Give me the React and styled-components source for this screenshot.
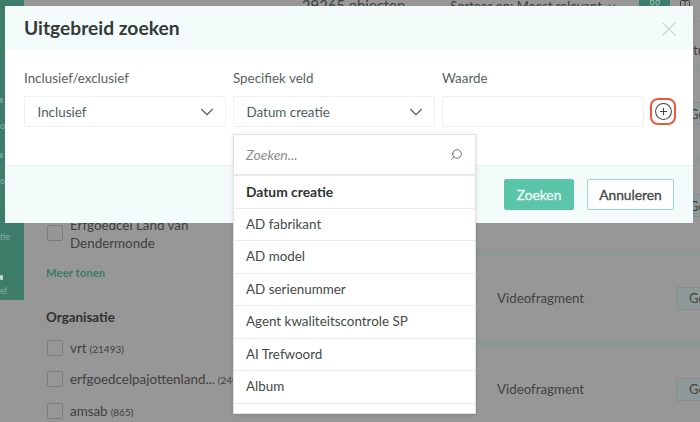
import React from 'react';
import styled, { createGlobalStyle } from 'styled-components';
import { ChevronDown, Search, CirclePlus, X, LayoutGrid, Columns2 } from 'lucide-react';

const GlobalStyle = createGlobalStyle`
  html, body {
    margin: 0;
    padding: 0;
    background: #979797;
  }
  * {
    box-sizing: border-box;
  }
`;

const Page = styled.div`
  position: relative;
  display: flex;
  align-items: flex-start;
  width: 700px;
  height: 422px;
  overflow: hidden;
  background: #979797;
  font-family: Lato, "Open Sans", sans-serif;
  color: #3d4241;
`;

const Sidebar = styled.div`
  flex: 0 0 24px;
  height: 300px;
  overflow: hidden;
  display: flex;
  flex-direction: column;
  align-items: flex-start;
  background: #3d7d69;
  color: #86b0a2;
  font-size: 9px;
  line-height: 10px;
`;

const SideLabel = styled.span`
  margin-top: ${(p) => p.$top}px;
`;

const SideMark = styled.span`
  width: 3px;
  height: 5px;
  margin-top: ${(p) => p.$top}px;
  border-radius: 1px;
  background: ${(p) => (p.$faint ? '#6d9f8e' : '#c4d8d0')};
`;

const Filters = styled.div`
  flex: 0 0 260px;
  padding-left: 23px;
  height: 422px;
`;

const FilterRow = styled.div`
  display: flex;
  align-items: ${(p) => (p.$wrap ? 'flex-start' : 'center')};
  gap: 7px;
  height: ${(p) => (p.$wrap ? '36px' : '16px')};
  margin-top: ${(p) => p.$top}px;
  font-size: 13.4px;
  line-height: 18px;
  color: #404040;
`;

const Checkbox = styled.span`
  flex: 0 0 16px;
  height: 16px;
  border: 1px solid #7d7d7d;
  border-radius: 2px;
  margin-top: ${(p) => (p.$wrap ? '9px' : '0')};
`;

const Count = styled.span`
  font-size: 10px;
  margin-left: 3px;
`;

const MoreLink = styled.div`
  margin: 13px 0 0 -1px;
  font-size: 11.4px;
  line-height: 16px;
  font-weight: 700;
  color: #3d7d69;
`;

const FilterTitle = styled.div`
  margin: 27px 0 0 -1px;
  font-size: 13.4px;
  line-height: 18px;
  font-weight: 700;
  color: #2f3332;
`;

const Results = styled.div`
  flex: 1;
  min-width: 0;
`;

const TopBar = styled.div`
  display: flex;
  align-items: flex-start;
  height: 22px;
  padding-left: 18px;
  border-bottom: 1px solid #85958f;
  font-size: 14.8px;
  line-height: 11px;
  white-space: nowrap;
`;

const SortBox = styled.div`
  display: flex;
  align-items: center;
  gap: 4px;
  margin-left: 45px;
  width: 193px;
  font-size: 13px;
`;

const ViewToggle = styled.div`
  display: flex;
  align-items: center;
  justify-content: center;
  width: ${(p) => (p.$active ? '32px' : '20px')};
  height: 10px;
  margin-right: 5px;
  background: ${(p) => (p.$active ? '#3d7d69' : 'transparent')};
  color: ${(p) => (p.$active ? '#8fb8aa' : '#3d4241')};
`;

const ResultRow = styled.div`
  display: flex;
  align-items: center;
  height: ${(p) => p.$height}px;
  padding-left: 213px;
  padding-top: ${(p) => p.$pushDown || 0}px;
  border-bottom: ${(p) => (p.$band ? '7px solid #8e9794' : '0')};
`;

const RowType = styled.span`
  flex: 0 0 179px;
  font-size: 13.3px;
  color: #3f4443;
`;

const EdgeText = styled.span`
  margin-left: 196px;
  font-size: 13.3px;
`;

const OpenButton = styled.span`
  display: flex;
  align-items: center;
  flex: 0 0 60px;
  height: 23px;
  padding-left: 12px;
  background: #8e9896;
  border: 1px solid #868e8c;
  border-radius: 2px;
  font-size: 13px;
  color: #3f4443;
`;

const Modal = styled.div`
  position: absolute;
  top: 6px;
  left: 5px;
  width: 688px;
  height: 217px;
  display: flex;
  flex-direction: column;
  background: #fff;
`;

const ModalHeader = styled.div`
  display: flex;
  align-items: center;
  justify-content: space-between;
  height: 44px;
  padding: 0 12px 0 19px;
  background: #f4fcfb;
`;

const ModalTitle = styled.h2`
  margin: 0;
  font-size: 19.2px;
  line-height: 24px;
  font-weight: 700;
  color: #343a39;
`;

const CloseButton = styled.span`
  display: flex;
  margin-top: 2px;
  color: #ced6d5;
`;

const ModalBody = styled.div`
  flex: 1;
  display: grid;
  grid-template-columns: 202px 202px 202px 26px;
  column-gap: 7px;
  align-content: start;
  padding: 20px 0 0 19px;
`;

const Label = styled.div`
  height: 26px;
  font-size: 13.4px;
  line-height: 17px;
  color: #5b6160;
`;

const Field = styled.div`
  position: relative;
  display: flex;
  align-items: center;
  justify-content: space-between;
  height: 31px;
  padding: 0 7px 0 12.5px;
  border: 1px solid #eef1f0;
  border-radius: 2px;
  font-size: 13.4px;
  color: #50605c;
`;

const PlusButton = styled.span`
  display: flex;
  align-items: center;
  justify-content: center;
  width: 26px;
  height: 27px;
  margin: 2px 0 0 -1px;
  border: 2px solid #ee583b;
  border-radius: 8px;
  color: #3f4645;
`;

const Dropdown = styled.div`
  position: absolute;
  top: 37px;
  left: -1px;
  z-index: 2;
  width: 243px;
  height: 280px;
  overflow: hidden;
  background: #fff;
  border: 1px solid #dfe3e2;
  box-shadow: 0 1px 4px rgba(0, 0, 0, 0.14);
`;

const SearchRow = styled.div`
  display: flex;
  align-items: center;
  justify-content: space-between;
  height: 41px;
  padding: 0 12px 1px 12px;
  border-bottom: 2px solid #e6e9e8;
  font-size: 14px;
  font-style: italic;
  color: #8b8f8e;
`;

const SearchIcon = styled(Search)`
  transform: scaleX(-1);
  color: #555b5a;
`;

const Option = styled.div`
  display: flex;
  align-items: center;
  height: 32.5px;
  padding: 0 0 1px 12px;
  border-bottom: 1.5px solid #e9eceb;
  font-size: ${(p) => (p.$selected ? '13.8px' : '13.4px')};
  font-weight: ${(p) => (p.$selected ? 700 : 400)};
  color: ${(p) => (p.$selected ? '#2f3534' : '#454a49')};
`;

const ModalFooter = styled.div`
  display: flex;
  align-items: center;
  justify-content: flex-end;
  gap: 13px;
  height: 58px;
  padding-right: 19px;
  background: #f4fcfb;
  border-top: 1px solid #e3f3f0;
`;

const Button = styled.span`
  display: flex;
  align-items: center;
  justify-content: center;
  height: 31px;
  width: ${(p) => (p.$primary ? '70px' : '87px')};
  border: ${(p) => (p.$primary ? '1px solid #5ac5a9' : '1px solid #9bdcca')};
  border-radius: 2px;
  background: ${(p) => (p.$primary ? '#5ac5a9' : '#fff')};
  color: ${(p) => (p.$primary ? '#eefaf6' : '#3f4645')};
  font-size: 13.8px;
  -webkit-text-stroke: 0.3px currentColor;
`;

const options = [
  'AD fabrikant',
  'AD model',
  'AD serienummer',
  'Agent kwaliteitscontrole SP',
  'AI Trefwoord',
  'Album',
  'Alternatieve titel',
];

export default function App() {
  return (
    <>
      <GlobalStyle />
      <Page>
        <Sidebar>
          <SideMark $faint $top={98} />
          <SideLabel $top={18}>ot</SideLabel>
          <SideMark $faint $top={22} />
          <SideLabel $top={18}>oc</SideLabel>
          <SideLabel $top={46}>tie</SideLabel>
          <SideMark $top={33} />
          <SideLabel $top={6}>el</SideLabel>
        </Sidebar>
        <Filters>
          <FilterRow $wrap $top={216}>
            <Checkbox $wrap />
            <span>
              Erfgoedcel Land van
              <br />
              Dendermonde
            </span>
          </FilterRow>
          <MoreLink>Meer tonen</MoreLink>
          <FilterTitle>Organisatie</FilterTitle>
          <FilterRow $top={14}>
            <Checkbox />
            <span>
              vrt<Count>(21493)</Count>
            </span>
          </FilterRow>
          <FilterRow $top={15}>
            <Checkbox />
            <span>
              erfgoedcelpajottenland...<Count>(2400)</Count>
            </span>
          </FilterRow>
          <FilterRow $top={16}>
            <Checkbox />
            <span>
              amsab<Count>(865)</Count>
            </span>
          </FilterRow>
        </Filters>
        <Results>
          <TopBar>
            29265 objecten
            <SortBox>
              Sorteer op: Meest relevant
              <ChevronDown size={12} />
            </SortBox>
            <ViewToggle $active>
              <LayoutGrid size={12} />
            </ViewToggle>
            <ViewToggle>
              <Columns2 size={12} />
            </ViewToggle>
          </TopBar>
          <ResultRow $height={50} $pushDown={13} $band>
            <EdgeText>tu</EdgeText>
          </ResultRow>
          <ResultRow $height={90} $band>
            <RowType>Videofragment</RowType>
            <OpenButton>Geef</OpenButton>
          </ResultRow>
          <ResultRow $height={94} $band>
            <RowType>Videofragment</RowType>
            <OpenButton>Geef</OpenButton>
          </ResultRow>
          <ResultRow $height={91} $band>
            <RowType>Videofragment</RowType>
            <OpenButton>Geef</OpenButton>
          </ResultRow>
          <ResultRow $height={84}>
            <RowType>Videofragment</RowType>
            <OpenButton>Geef</OpenButton>
          </ResultRow>
        </Results>
        <Modal>
          <ModalHeader>
            <ModalTitle>Uitgebreid zoeken</ModalTitle>
            <CloseButton>
              <X size={24} strokeWidth={1.2} />
            </CloseButton>
          </ModalHeader>
          <ModalBody>
            <Label>Inclusief/exclusief</Label>
            <Label>Specifiek veld</Label>
            <Label>Waarde</Label>
            <span />
            <Field>
              Inclusief
              <ChevronDown size={22} strokeWidth={1.2} />
            </Field>
            <Field>
              Datum creatie
              <ChevronDown size={22} strokeWidth={1.2} />
              <Dropdown>
                <SearchRow>
                  Zoeken...
                  <SearchIcon size={13} strokeWidth={1.5} />
                </SearchRow>
                <Option $selected>Datum creatie</Option>
                {options.map((option) => (
                  <Option key={option}>{option}</Option>
                ))}
              </Dropdown>
            </Field>
            <Field />
            <PlusButton>
              <CirclePlus size={19} strokeWidth={1.3} />
            </PlusButton>
          </ModalBody>
          <ModalFooter>
            <Button $primary>Zoeken</Button>
            <Button>Annuleren</Button>
          </ModalFooter>
        </Modal>
      </Page>
    </>
  );
}
